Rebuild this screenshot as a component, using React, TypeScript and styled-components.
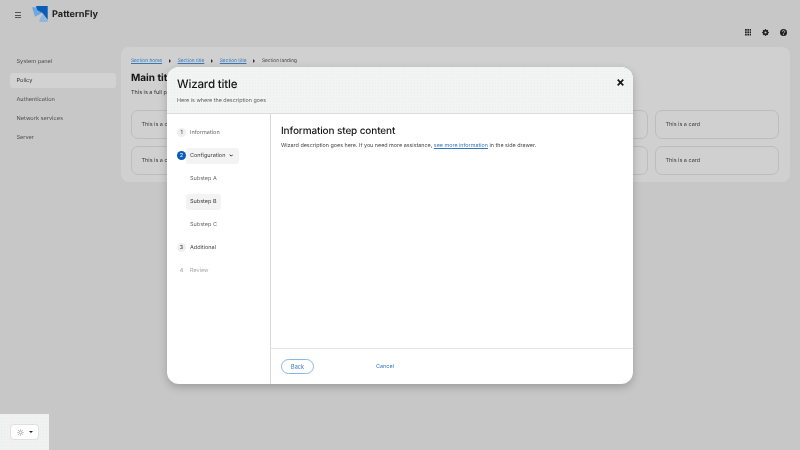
import React from "react";
import styled, { createGlobalStyle } from "styled-components";

const Global = createGlobalStyle`
  html, body { margin: 0; padding: 0; width: 800px; height: 450px; overflow: hidden; background: #c7c7c7; }
  body {
    font-family: "Inter", "Noto Sans", "Liberation Sans", sans-serif;
    text-rendering: geometricPrecision;
  }
  * { box-sizing: border-box; }
`;

const Page = styled.div`
  position: relative;
  width: 800px;
  height: 450px;
  background: #c7c7c7;
  overflow: hidden;
  display: flex;
  flex-direction: column;
  filter: blur(0.3px);
`;

const Masthead = styled.header`
  height: 47px;
  flex: none;
  position: relative;
  display: flex;
  align-items: flex-start;
  padding: 6px 10px 0 15px;
`;

const Burger = styled.span`
  width: 6px;
  height: 6px;
  margin-top: 6px;
  border-top: 1px solid #555;
  border-bottom: 1px solid #555;
  position: relative;
  &::after {
    content: "";
    position: absolute;
    left: 0;
    right: 0;
    top: 1.5px;
    height: 1px;
    background: #555;
  }
`;

const Brand = styled.div`
  display: flex;
  align-items: center;
  gap: 3px;
  margin-left: 11px;
  height: 17px;
  font-weight: 700;
  font-size: 9.2px;
  color: #1f1f1f;
`;

const Tools = styled.div`
  position: absolute;
  right: 13px;
  top: 29px;
  display: flex;
  gap: 11px;
  align-items: center;
`;

const Body = styled.div`
  display: flex;
  flex: 1;
  align-items: flex-start;
`;

const Side = styled.nav`
  width: 121px;
  flex: none;
  padding: 7px 5px 0 10px;
  display: flex;
  flex-direction: column;
  gap: 4px;
`;

const SideItem = styled.div<{ $on?: boolean }>`
  height: 15px;
  border-radius: 3px;
  padding-left: 6.5px;
  display: flex;
  align-items: center;
  font-size: 5.6px;
  color: ${(p) => (p.$on ? "#333" : "#4d4d4d")};
  background: ${(p) => (p.$on ? "#d2d2d2" : "transparent")};
`;

const Main = styled.main`
  width: 669px;
  height: 135px;
  flex: none;
  background: #d0d0d0;
  border-radius: 8px;
  padding: 10px;
`;

const Crumbs = styled.div`
  display: flex;
  align-items: center;
  height: 7px;
  font-size: 4.8px;
  gap: 5.75px;
  color: #444;
`;

const Crumb = styled.span`
  color: #3478bd;
  text-decoration: underline;
`;

const Caret = styled.span`
  width: 0;
  height: 0;
  margin: 0 1px;
  border-left: 2.5px solid #333;
  border-top: 2px solid transparent;
  border-bottom: 2px solid transparent;
`;

const MainTitle = styled.h1`
  margin: 8px 0 0;
  font-size: 10px;
  line-height: 13px;
  font-weight: 700;
  color: #151515;
`;

const Lede = styled.p`
  margin: 4px 0 0;
  font-size: 5.5px;
  line-height: 8px;
  color: #333;
`;

const CardGrid = styled.div`
  margin-top: 13px;
  display: grid;
  grid-template-columns: repeat(5, 124px);
  grid-auto-rows: 29px;
  gap: 7px;
`;

const Card = styled.div`
  border: 1px solid #bdbdbd;
  border-radius: 7px;
  padding-left: 9.5px;
  display: flex;
  align-items: center;
  font-size: 5.5px;
  color: #3d3d3d;
`;

const ThemePanel = styled.div`
  position: absolute;
  left: 0;
  bottom: 0;
  width: 49px;
  height: 36px;
  background-color: #f0f1f1;
  background-image: radial-gradient(#e9ebeb 0.5px, transparent 0.6px);
  background-size: 3px 3px;
  padding: 10px;
`;

const ThemeButton = styled.div`
  width: 29px;
  height: 16px;
  background: #fff;
  border: 1px solid #e0e0e0;
  border-radius: 4px;
  display: flex;
  align-items: center;
  justify-content: center;
  gap: 5px;
`;

const DownTip = styled.span`
  width: 0;
  height: 0;
  border-top: 2.5px solid #222;
  border-left: 2.2px solid transparent;
  border-right: 2.2px solid transparent;
`;

const Modal = styled.section`
  position: absolute;
  left: 167px;
  top: 67px;
  width: 466px;
  height: 317px;
  background: #fff;
  border-radius: 12px;
  overflow: hidden;
  display: flex;
  flex-direction: column;
  box-shadow: 0 3px 8px rgba(0, 0, 0, 0.22);
`;

const ModalHead = styled.div`
  height: 47px;
  flex: none;
  position: relative;
  background-color: #f2f3f3;
  background-image: radial-gradient(#ebeded 0.5px, transparent 0.6px);
  background-size: 3px 3px;
  border-bottom: 1px solid #dcdcdc;
  padding: 9px 10px 0 10px;
`;

const WizardTitle = styled.h2`
  margin: 0;
  font-size: 11.6px;
  letter-spacing: -0.2px;
  line-height: 16px;
  font-weight: 500;
  color: #151515;
`;

const WizardDesc = styled.p`
  margin: 5px 0 0;
  font-size: 5.4px;
  line-height: 8px;
  color: #5c5c5c;
`;

const Close = styled.button`
  position: absolute;
  right: 8.5px;
  top: 11.5px;
  width: 8px;
  height: 8px;
  padding: 0;
  border: 0;
  background: none;
  display: flex;
`;

const ModalBody = styled.div`
  flex: 1;
  display: flex;
  min-height: 0;
`;

const Steps = styled.div`
  width: 104px;
  flex: none;
  border-right: 1px solid #d8d8d8;
  padding: 10.5px 0 0 10px;
  display: flex;
  flex-direction: column;
  gap: 7px;
`;

const StepRow = styled.div<{ $sub?: boolean }>`
  height: 16px;
  display: flex;
  align-items: center;
  padding-left: ${(p) => (p.$sub ? "9px" : "0")};
`;

const Num = styled.span<{ $tone?: "current" | "plain" | "off" }>`
  width: 9px;
  height: 9px;
  border-radius: 50%;
  flex: none;
  display: flex;
  align-items: center;
  justify-content: center;
  font-size: 5.4px;
  background: ${(p) =>
    p.$tone === "current" ? "#0a5cb8" : p.$tone === "off" ? "transparent" : "#efefef"};
  color: ${(p) => (p.$tone === "current" ? "#fff" : p.$tone === "off" ? "#999" : "#333")};
`;

const StepLabel = styled.span<{ $on?: boolean; $off?: boolean; $dark?: boolean; $menu?: boolean }>`
  display: inline-flex;
  align-items: center;
  gap: 3.5px;
  height: 16px;
  padding: 0 ${(p) => (p.$menu ? "6px" : "4px")} 0 4px;
  border-radius: 3px;
  font-size: 5.5px;
  background: ${(p) => (p.$on ? "#f3f3f3" : "transparent")};
  color: ${(p) => (p.$off ? "#aaa" : p.$on || p.$dark ? "#444" : "#6a6a6a")};
`;

const Content = styled.div`
  flex: 1;
  display: flex;
  flex-direction: column;
`;

const ContentMain = styled.div`
  flex: 1;
  padding: 10px;
`;

const ContentTitle = styled.h3`
  margin: 0;
  font-size: 10px;
  letter-spacing: -0.13px;
  line-height: 14px;
  font-weight: 500;
  color: #151515;
`;

const ContentText = styled.p`
  margin: 3.5px 0 0;
  font-size: 5.4px;
  line-height: 8px;
  color: #444;
`;

const TextLink = styled.a`
  color: #3478bd;
  text-decoration: underline;
`;

const Footer = styled.div`
  height: 36px;
  flex: none;
  border-top: 1px solid #e6e6e6;
  display: flex;
  align-items: center;
  padding-left: 10px;
`;

const BackButton = styled.button`
  width: 33px;
  height: 15.5px;
  border: 1px solid #8ab8e6;
  border-radius: 8px;
  background: #fff;
  color: #3478bd;
  font: inherit;
  font-size: 5.5px;
  padding: 0;
`;

const CancelLink = styled.span`
  margin-left: 62px;
  font-size: 5.5px;
  color: #3478bd;
`;

const Logo = () => (
  <svg width="17" height="17" viewBox="0 0 17 17">
    <path d="M0 1.3h5.3l4.4 6L3 10.7z" fill="#6fa8dc" />
    <path d="M4 0h11.7v14l-5-6.7L5.3 4z" fill="#0a5cb8" />
    <path d="M7.3 16h8.4v-2l-5-6-2.7 4.3z" fill="#8fb6dc" />
  </svg>
);

const Grid = () => (
  <svg width="6.5" height="6.5" viewBox="0 0 6 6" fill="#222">
    {[0, 2.2, 4.4].flatMap((y) =>
      [0, 2.2, 4.4].map((x) => <rect key={`${x}-${y}`} x={x} y={y} width="1.6" height="1.6" />)
    )}
  </svg>
);

const Gear = () => (
  <svg width="7" height="7" viewBox="0 0 16 16">
    <circle cx="8" cy="8" r="4.6" fill="none" stroke="#222" strokeWidth="3" />
    {[0, 45, 90, 135].map((a) => (
      <rect key={a} x="6.6" y="0.3" width="2.8" height="15.4" fill="#222" transform={`rotate(${a} 8 8)`} />
    ))}
    <circle cx="8" cy="8" r="2.4" fill="#c7c7c7" />
  </svg>
);

const Sun = () => (
  <svg width="7" height="7" viewBox="0 0 16 16" stroke="#8a8a8a" strokeWidth="1.6" fill="none">
    <circle cx="8" cy="8" r="3.4" />
    {[0, 45, 90, 135, 180, 225, 270, 315].map((a) => (
      <line key={a} x1="8" y1="0.8" x2="8" y2="3" transform={`rotate(${a} 8 8)`} />
    ))}
  </svg>
);

const Help = () => (
  <svg width="7" height="7" viewBox="0 0 16 16">
    <circle cx="8" cy="8" r="8" fill="#222" />
    <path d="M5.4 6.2a2.7 2.7 0 1 1 3.8 2.4c-.8.4-1.2.8-1.2 1.6" fill="none" stroke="#c7c7c7" strokeWidth="2" />
    <rect x="7" y="11.4" width="2" height="2" fill="#c7c7c7" />
  </svg>
);

const Chevron = () => (
  <svg width="4.5" height="3" viewBox="0 0 10 7">
    <path d="M1.5 1.5l3.5 3.5 3.5-3.5" fill="none" stroke="#222" strokeWidth="2.2" />
  </svg>
);

const CloseIcon = () => (
  <svg width="7" height="7" viewBox="0 0 10 10">
    <path d="M1 1l8 8M9 1l-8 8" stroke="#151515" strokeWidth="2.4" />
  </svg>
);

const sideItems = ["System panel", "Policy", "Authentication", "Network services", "Server"];

export default function App() {
  return (
    <Page>
      <Global />
      <Masthead>
        <Burger />
        <Brand>
          <Logo />
          PatternFly
        </Brand>
        <Tools>
          <Grid />
          <Gear />
          <Help />
        </Tools>
      </Masthead>
      <Body>
        <Side>
          {sideItems.map((s) => (
            <SideItem key={s} $on={s === "Policy"}>
              {s}
            </SideItem>
          ))}
        </Side>
        <Main>
          <Crumbs>
            <Crumb>Section home</Crumb>
            <Caret />
            <Crumb>Section title</Crumb>
            <Caret />
            <Crumb>Section title</Crumb>
            <Caret />
            <span>Section landing</span>
          </Crumbs>
          <MainTitle>Main title</MainTitle>
          <Lede>This is a full page</Lede>
          <CardGrid>
            {Array.from({ length: 10 }, (_, i) => (
              <Card key={i}>This is a card</Card>
            ))}
          </CardGrid>
        </Main>
      </Body>
      <ThemePanel>
        <ThemeButton>
          <Sun />
          <DownTip />
        </ThemeButton>
      </ThemePanel>
      <Modal>
        <ModalHead>
          <WizardTitle>Wizard title</WizardTitle>
          <WizardDesc>Here is where the description goes</WizardDesc>
          <Close aria-label="Close">
            <CloseIcon />
          </Close>
        </ModalHead>
        <ModalBody>
          <Steps>
            <StepRow>
              <Num>1</Num>
              <StepLabel>Information</StepLabel>
            </StepRow>
            <StepRow>
              <Num $tone="current">2</Num>
              <StepLabel $on $menu>
                Configuration <Chevron />
              </StepLabel>
            </StepRow>
            <StepRow $sub>
              <StepLabel>Substep A</StepLabel>
            </StepRow>
            <StepRow $sub>
              <StepLabel $on>Substep B</StepLabel>
            </StepRow>
            <StepRow $sub>
              <StepLabel>Substep C</StepLabel>
            </StepRow>
            <StepRow>
              <Num>3</Num>
              <StepLabel $dark>Additional</StepLabel>
            </StepRow>
            <StepRow>
              <Num $tone="off">4</Num>
              <StepLabel $off>Review</StepLabel>
            </StepRow>
          </Steps>
          <Content>
            <ContentMain>
              <ContentTitle>Information step content</ContentTitle>
              <ContentText>
                Wizard description goes here. If you need more assistance,{" "}
                <TextLink>see more information</TextLink> in the side drawer.
              </ContentText>
            </ContentMain>
            <Footer>
              <BackButton>Back</BackButton>
              <CancelLink>Cancel</CancelLink>
            </Footer>
          </Content>
        </ModalBody>
      </Modal>
    </Page>
  );
}
